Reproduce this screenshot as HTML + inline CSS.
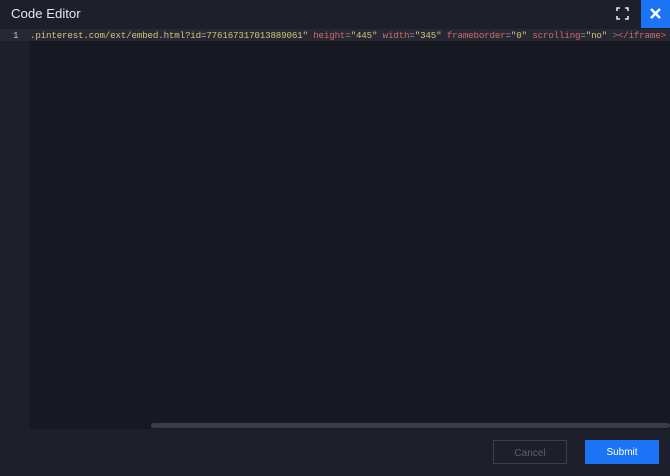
<!DOCTYPE html>
<html><head><style>
body{margin:0;width:670px;height:476px;background:#1d1f2a;overflow:hidden;font-family:"Liberation Sans",sans-serif;position:relative}
.title{position:absolute;left:11px;top:6px;color:#e6e7ea;font-size:13.2px}
.close{position:absolute;left:641px;top:0;width:29px;height:28px;background:#1b74f6}
.gutter{position:absolute;left:0;top:29px;width:30px;height:400px;background:#1d1f2a}
.editor{position:absolute;left:30px;top:41px;width:640px;height:388px;background:#171922}
.line{position:absolute;left:0;top:29px;width:670px;height:12px;background:#262833;font-family:"Liberation Mono",monospace;font-size:9.2px;letter-spacing:-0.17px;line-height:13px;white-space:nowrap;color:#c9c9a8}
.ln{position:absolute;left:13px;color:#c8c8c8}
.code{position:absolute;left:30px}
.a{color:#d06a6a}.s{color:#d2c57a}.p{color:#a0a0a0}
.sb{position:absolute;left:151px;top:423px;width:519px;height:5px;background:#3a3c47;border-radius:3px}
.btn{position:absolute;top:440px;width:74px;height:24px;box-sizing:border-box;font-size:10px;text-align:center;line-height:25px}
</style></head><body>
<div class="title">Code Editor</div>
<svg style="position:absolute;left:616px;top:7px" width="13" height="13" viewBox="0 0 13 13" fill="none" stroke="#e6e7ea" stroke-width="1.6"><path d="M1 4V1h3M9 1h3v3M12 9v3H9M4 12H1V9"/></svg>
<div class="close"><svg style="position:absolute;left:9px;top:8px" width="11" height="11" viewBox="0 0 11 11" stroke="#fff" stroke-width="2.4"><path d="M1 1l9 9M10 1L1 10"/></svg></div>
<div class="gutter"></div>
<div class="editor"></div>
<div class="line"><span class="ln">1</span><span class="code"><span class="s">.pinterest.com/ext/embed.html?id=776167317013889061"</span> <span class="a">height</span><span class="p">=</span><span class="s">"445"</span> <span class="a">width</span><span class="p">=</span><span class="s">"345"</span> <span class="a">frameborder</span><span class="p">=</span><span class="s">"0"</span> <span class="a">scrolling</span><span class="p">=</span><span class="s">"no"</span> <span class="a">&gt;&lt;/iframe&gt;</span></span></div>
<div class="sb"></div>
<div class="btn" style="left:493px;border:1px solid #3d404b;color:#5c5f69">Cancel</div>
<div class="btn" style="left:585px;background:#1b74f6;color:#fff">Submit</div>
</body></html>
